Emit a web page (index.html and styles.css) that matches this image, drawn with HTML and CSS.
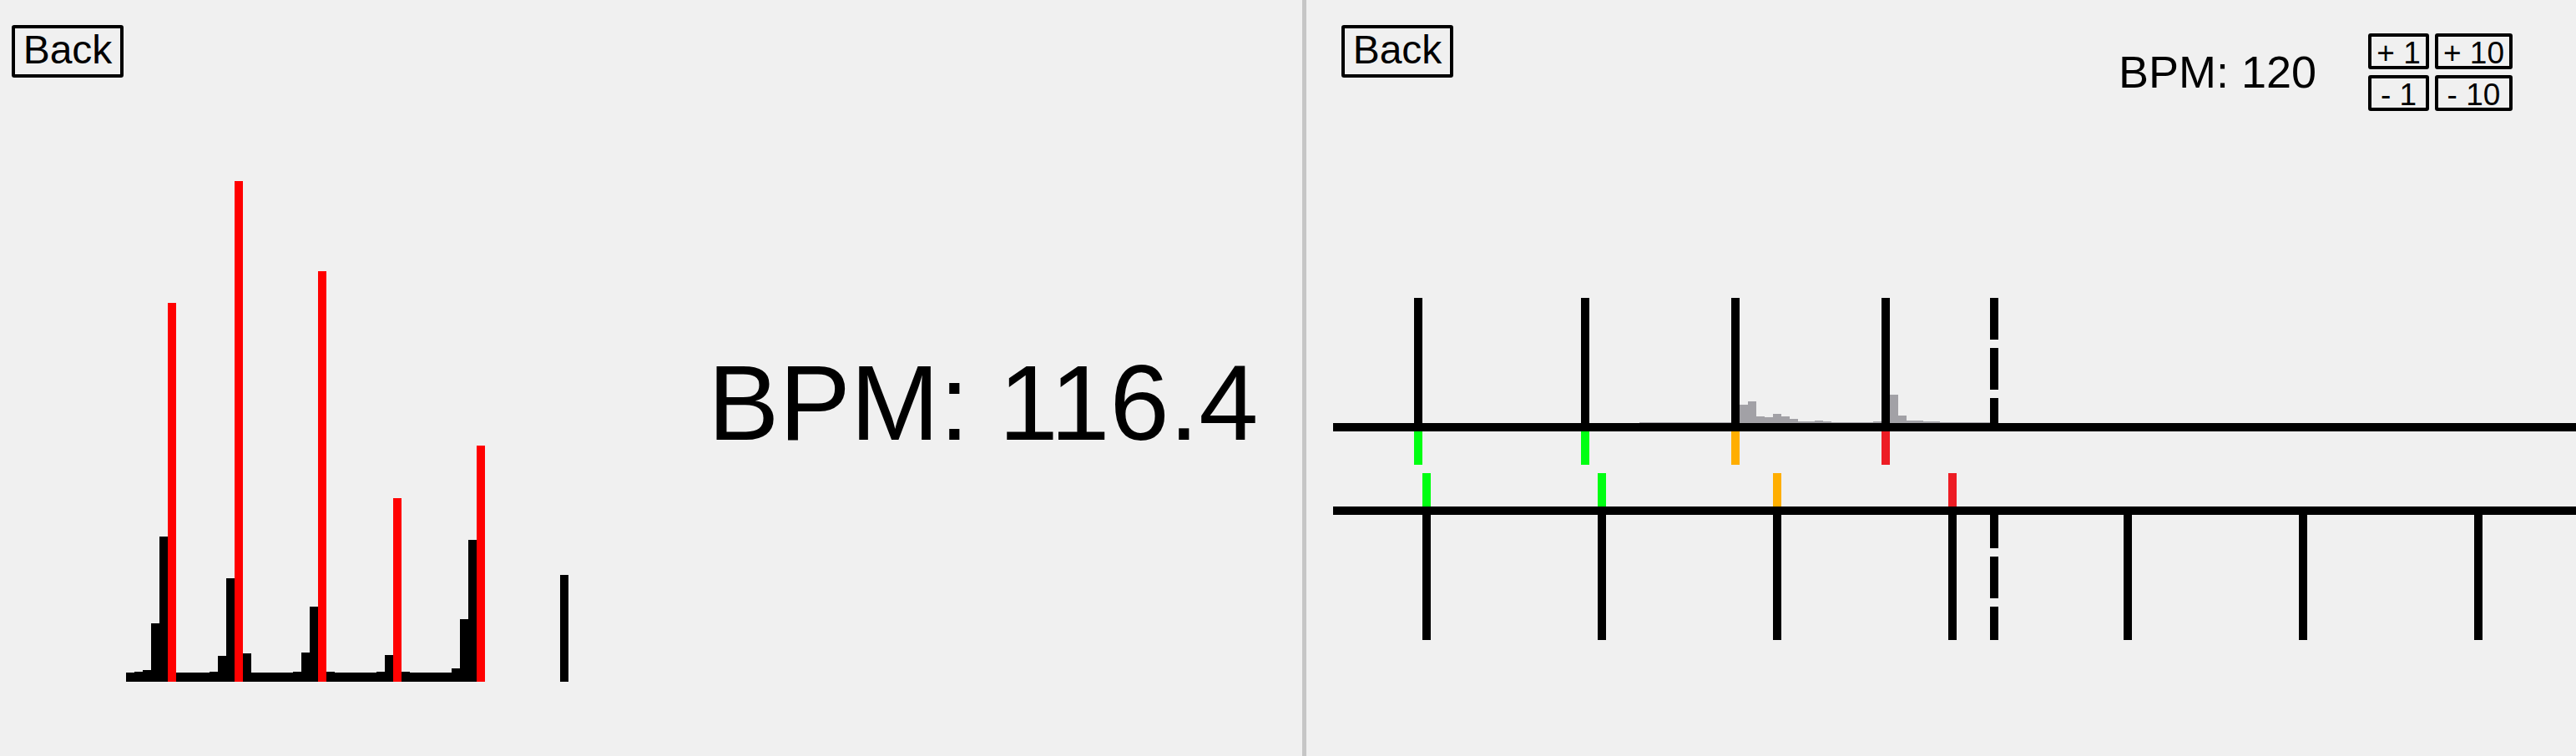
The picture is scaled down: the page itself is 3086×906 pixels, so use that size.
FILE: index.html
```html
<!DOCTYPE html>
<html lang="en">
<head>
<meta charset="utf-8">
<title>BPM</title>
<link rel="stylesheet" href="styles.css">
</head>
<body>
<div class="app">
  <section class="panel panel-left">
    <div class="bar bar-left">
      <button class="btn btn-back">Back</button>
    </div>
    <div class="left-main">
      <svg class="histogram" width="700" height="630" viewBox="0 200 700 630" shape-rendering="crispEdges">
        <g fill="#000">
          <rect x="151" y="806" width="10" height="11"/>
          <rect x="161" y="805" width="10" height="12"/>
          <rect x="171" y="803" width="10" height="14"/>
          <rect x="181" y="747" width="10" height="70"/>
          <rect x="191" y="643" width="10" height="174"/>
          <rect x="211" y="806" width="40" height="11"/>
          <rect x="251" y="805" width="10" height="12"/>
          <rect x="261" y="786" width="10" height="31"/>
          <rect x="271" y="693" width="10" height="124"/>
          <rect x="291" y="783" width="10" height="34"/>
          <rect x="301" y="806" width="50" height="11"/>
          <rect x="351" y="805" width="10" height="12"/>
          <rect x="361" y="782" width="10" height="35"/>
          <rect x="371" y="727" width="10" height="90"/>
          <rect x="391" y="805" width="10" height="12"/>
          <rect x="401" y="806" width="50" height="11"/>
          <rect x="451" y="805" width="10" height="12"/>
          <rect x="461" y="785" width="10" height="32"/>
          <rect x="481" y="805" width="10" height="12"/>
          <rect x="491" y="806" width="50" height="11"/>
          <rect x="541" y="801" width="10" height="16"/>
          <rect x="551" y="742" width="10" height="75"/>
          <rect x="561" y="647" width="10" height="170"/>
          <rect x="671" y="689" width="10" height="128"/>
        </g>
        <g fill="#ff0000">
          <rect x="201" y="363" width="10" height="454"/>
          <rect x="281" y="217" width="10" height="600"/>
          <rect x="381" y="325" width="10" height="492"/>
          <rect x="471" y="597" width="10" height="220"/>
          <rect x="571" y="534" width="10" height="283"/>
        </g>
      </svg>
      <div class="big-bpm">BPM: 116.4</div>
    </div>
  </section>
  <div class="divider"></div>
  <section class="panel panel-right">
    <div class="bar bar-right">
      <button class="btn btn-back">Back</button>
      <div class="bpm">BPM: 120</div>
      <div class="adjust">
        <button class="btn btn-small">+ 1</button>
        <button class="btn btn-small">+ 10</button>
        <button class="btn btn-small">- 1</button>
        <button class="btn btn-small">- 10</button>
      </div>
    </div>
    <svg class="timeline" width="1521" height="440" viewBox="1565 340 1521 440" shape-rendering="crispEdges">
      <g fill="#a2a1a6">
        <rect x="1964" y="506" width="110" height="1"/>
        <rect x="2084" y="485" width="10" height="22"/>
        <rect x="2094" y="481" width="10" height="26"/>
        <rect x="2104" y="499" width="10" height="8"/>
        <rect x="2114" y="500" width="10" height="7"/>
        <rect x="2124" y="496" width="10" height="11"/>
        <rect x="2134" y="499" width="10" height="8"/>
        <rect x="2144" y="502" width="10" height="5"/>
        <rect x="2154" y="505" width="20" height="2"/>
        <rect x="2174" y="504" width="10" height="3"/>
        <rect x="2184" y="505" width="10" height="2"/>
        <rect x="2194" y="506" width="50" height="1"/>
        <rect x="2244" y="505" width="10" height="2"/>
        <rect x="2264" y="473" width="10" height="34"/>
        <rect x="2274" y="498" width="10" height="9"/>
        <rect x="2284" y="504" width="20" height="3"/>
        <rect x="2304" y="505" width="20" height="2"/>
        <rect x="2324" y="506" width="60" height="1"/>
      </g>
      <g fill="#000">
        <rect x="1694" y="357" width="10" height="150"/>
        <rect x="1894" y="357" width="10" height="150"/>
        <rect x="2074" y="357" width="10" height="150"/>
        <rect x="2254" y="357" width="10" height="150"/>
        <rect x="2384" y="357" width="10" height="50"/>
        <rect x="2384" y="417" width="10" height="50"/>
        <rect x="2384" y="477" width="10" height="30"/>
        <rect x="1597" y="507" width="1489" height="10"/>
        <rect x="1597" y="607" width="1489" height="10"/>
        <rect x="1704" y="617" width="10" height="150"/>
        <rect x="1914" y="617" width="10" height="150"/>
        <rect x="2124" y="617" width="10" height="150"/>
        <rect x="2334" y="617" width="10" height="150"/>
        <rect x="2544" y="617" width="10" height="150"/>
        <rect x="2754" y="617" width="10" height="150"/>
        <rect x="2964" y="617" width="10" height="150"/>
        <rect x="2384" y="617" width="10" height="40"/>
        <rect x="2384" y="667" width="10" height="50"/>
        <rect x="2384" y="727" width="10" height="40"/>
      </g>
      <g>
        <rect class="hit-good" x="1694" y="517" width="10" height="40"/>
        <rect class="hit-good" x="1894" y="517" width="10" height="40"/>
        <rect class="hit-ok" x="2074" y="517" width="10" height="40"/>
        <rect class="hit-bad" x="2254" y="517" width="10" height="40"/>
        <rect class="hit-good" x="1704" y="567" width="10" height="40"/>
        <rect class="hit-good" x="1914" y="567" width="10" height="40"/>
        <rect class="hit-ok" x="2124" y="567" width="10" height="40"/>
        <rect class="hit-bad" x="2334" y="567" width="10" height="40"/>
      </g>
    </svg>
  </section>
</div>
</body>
</html>
```

FILE: styles.css
```css
html, body {
  margin: 0;
  padding: 0;
  background: #f0f0f0;
  overflow: hidden;
}

body {
  font-family: "Liberation Sans", Arial, sans-serif;
  color: #000;
  width: 3086px;
  height: 906px;
}

.app {
  display: flex;
  height: 906px;
}

.panel {
  box-sizing: border-box;
  height: 100%;
}

.panel-left {
  width: 1560px;
  flex: none;
}

.divider {
  width: 5px;
  flex: none;
  background: #c6c6c6;
}

.panel-right {
  flex: 1;
  min-width: 0;
}

.bar {
  display: flex;
  align-items: flex-start;
  padding-top: 30px;
}

.bar-left {
  padding-left: 14px;
}

.bar-right {
  padding-left: 42px;
  padding-right: 76px;
}

.btn {
  box-sizing: border-box;
  margin: 0;
  font-family: "Liberation Sans", Arial, sans-serif;
  color: #000;
  background: transparent;
  border: 4px solid #000;
  border-radius: 3px;
  text-align: center;
  white-space: pre;
  display: block;
}

.btn-back {
  width: 134px;
  font-size: 48px;
  line-height: 51px;
  padding: 0 0 4px 0;
}

.btn-small {
  font-size: 37px;
  line-height: 30px;
  padding: 5px 0 0 0;
}

.adjust {
  display: grid;
  grid-template-columns: 73px 93px;
  gap: 7px;
  margin-top: 10px;
}

.bpm {
  margin-left: auto;
  margin-right: 62px;
  margin-top: 29px;
  font-size: 54px;
  line-height: 54px;
  white-space: pre;
}

.left-main {
  display: flex;
  align-items: flex-start;
  margin-top: 107px;
}

.histogram {
  display: block;
  flex: none;
}

.big-bpm {
  margin-left: 148px;
  margin-top: 219px;
  font-size: 128px;
  line-height: 128px;
  white-space: pre;
}

.timeline {
  display: block;
  margin-top: 207px;
}

.hit-good { fill: #00ff12; }
.hit-ok { fill: #ffae00; }
.hit-bad { fill: #ed1c24; }
```
